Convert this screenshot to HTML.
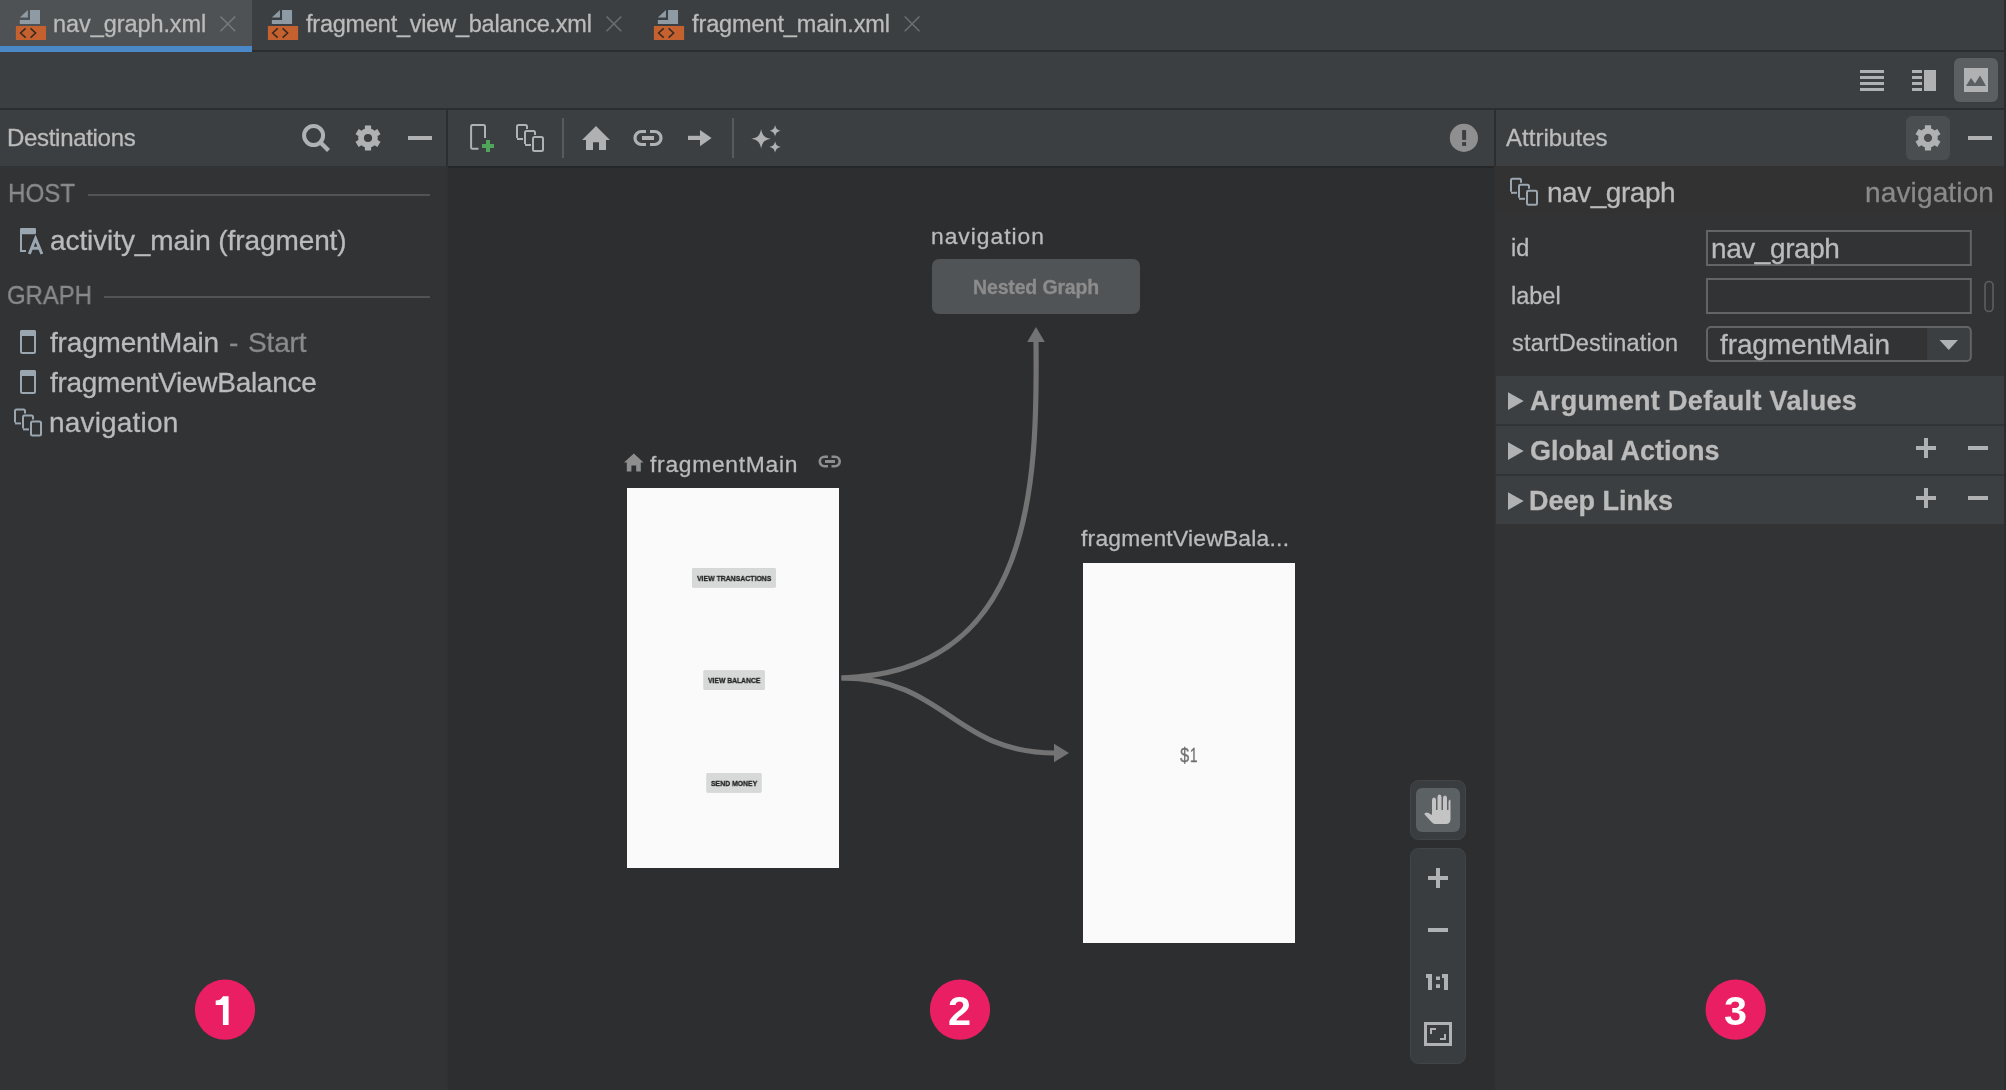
<!DOCTYPE html>
<html><head><meta charset="utf-8"><title>Navigation Editor</title>
<style>
html,body{margin:0;padding:0}
body{width:2006px;height:1090px;position:relative;overflow:hidden;background:#2D2E30;font-family:"Liberation Sans",sans-serif}
.a{position:absolute}
.t{position:absolute;white-space:nowrap;line-height:1;will-change:transform;-webkit-text-stroke:0.3px currentColor;font-family:"Liberation Sans",sans-serif}
svg{position:absolute;left:0;top:0}
</style></head><body>

<div class="a" style="left:0;top:0;width:2006px;height:50px;background:#3C3F41"></div>
<div class="a" style="left:0;top:50px;width:2006px;height:2px;background:#2B2D2E"></div>
<div class="a" style="left:0;top:0;width:252px;height:46px;background:#4E5254"></div>
<div class="a" style="left:0;top:46px;width:252px;height:6px;background:#4A88C7"></div>
<div class="a" style="left:0;top:52px;width:2006px;height:56px;background:#3C3F41"></div>
<div class="a" style="left:0;top:108px;width:2006px;height:2px;background:#2B2D2E"></div>
<div class="a" style="left:0;top:110px;width:2006px;height:56px;background:#3C3F41"></div>
<div class="a" style="left:0;top:166px;width:446px;height:924px;background:#323335"></div>
<div class="a" style="left:446px;top:110px;width:2px;height:56px;background:#2B2D2E"></div>
<div class="a" style="left:446px;top:166px;width:2px;height:924px;background:#333232"></div>
<div class="a" style="left:448px;top:166px;width:1046px;height:924px;background:#2D2E30"></div>
<div class="a" style="left:448px;top:166px;width:1046px;height:2px;background:#252627"></div>
<div class="a" style="left:1494px;top:110px;width:2px;height:56px;background:#2B2D2E"></div>
<div class="a" style="left:1494px;top:166px;width:2px;height:924px;background:#323131"></div>
<div class="a" style="left:1496px;top:166px;width:508px;height:924px;background:#323335"></div>
<div class="a" style="left:1496px;top:166px;width:508px;height:48px;background:#323233"></div>
<div class="a" style="left:2004px;top:0;width:2px;height:1090px;background:#2B2D2E"></div>

<svg width="2006" height="1090" viewBox="0 0 2006 1090">
<rect x="30.0" y="10" width="10" height="14" fill="#8E9BA4"/><rect x="19.8" y="20" width="10.2" height="4" fill="#8E9BA4"/><path d="M19.8,17.6 L27.9,10 L27.9,17.6 Z" fill="#8E9BA4"/><rect x="15.85" y="26" width="30.2" height="14" fill="#C5612F"/><path d="M25.6,28.3 L20.6,33 L25.6,37.7 M30.6,28.3 L35.6,33 L30.6,37.7" stroke="#3B2A22" stroke-width="1.6" fill="none"/>
<rect x="282.04999999999995" y="10" width="10" height="14" fill="#8E9BA4"/><rect x="271.84999999999997" y="20" width="10.2" height="4" fill="#8E9BA4"/><path d="M271.84999999999997,17.6 L279.95,10 L279.95,17.6 Z" fill="#8E9BA4"/><rect x="267.9" y="26" width="30.2" height="14" fill="#C5612F"/><path d="M277.65,28.3 L272.65,33 L277.65,37.7 M282.65,28.3 L287.65,33 L282.65,37.7" stroke="#3B2A22" stroke-width="1.6" fill="none"/>
<rect x="668.05" y="10" width="10" height="14" fill="#8E9BA4"/><rect x="657.8499999999999" y="20" width="10.2" height="4" fill="#8E9BA4"/><path d="M657.8499999999999,17.6 L665.9499999999999,10 L665.9499999999999,17.6 Z" fill="#8E9BA4"/><rect x="653.9" y="26" width="30.2" height="14" fill="#C5612F"/><path d="M663.65,28.3 L658.65,33 L663.65,37.7 M668.65,28.3 L673.65,33 L668.65,37.7" stroke="#3B2A22" stroke-width="1.6" fill="none"/>
<path d="M220.4,16.5 L235.20000000000002,31.3 M235.20000000000002,16.5 L220.4,31.3" stroke="#75797B" stroke-width="1.6" fill="none"/>
<path d="M606.5,16.5 L621.3,31.3 M621.3,16.5 L606.5,31.3" stroke="#6B6E70" stroke-width="1.6" fill="none"/>
<path d="M904.7,16.5 L919.5,31.3 M919.5,16.5 L904.7,31.3" stroke="#6B6E70" stroke-width="1.6" fill="none"/>
<rect x="1860" y="70" width="24" height="3" fill="#AFB1B3"/>
<rect x="1912" y="70" width="10" height="3" fill="#AFB1B3"/>
<rect x="1860" y="76" width="24" height="3" fill="#AFB1B3"/>
<rect x="1912" y="76" width="10" height="3" fill="#AFB1B3"/>
<rect x="1860" y="82" width="24" height="3" fill="#AFB1B3"/>
<rect x="1912" y="82" width="10" height="3" fill="#AFB1B3"/>
<rect x="1860" y="88" width="24" height="3" fill="#AFB1B3"/>
<rect x="1912" y="88" width="10" height="3" fill="#AFB1B3"/>
<rect x="1924" y="70" width="12" height="21" fill="#AFB1B3"/>
<rect x="1954" y="58" width="44" height="44" fill="#5B5F62" rx="6"/>
<rect x="1964" y="68" width="24" height="24" fill="#AFB1B3"/>
<path d="M1966,86 L1971,78 L1975,83.5 L1980,75.5 L1986,86 Z" fill="#5B5F62"/>
<circle cx="313.6" cy="135.5" r="9.5" stroke="#AFB1B3" stroke-width="4" fill="none"/>
<path d="M320.5,142.5 L328.5,150.5" stroke="#AFB1B3" stroke-width="4.2" fill="none"/>
<path d="M371.10,128.70 L371.10,125.38 L364.90,125.38 L364.90,128.70 A9.80,9.80 0 0 0 361.50,130.67 L358.62,129.00 L355.52,134.37 L358.40,136.04 A9.80,9.80 0 0 0 358.40,139.96 L355.52,141.63 L358.62,147.00 L361.50,145.33 A9.80,9.80 0 0 0 364.90,147.30 L364.90,150.62 L371.10,150.62 L371.10,147.30 A9.80,9.80 0 0 0 374.50,145.33 L377.38,147.00 L380.48,141.63 L377.60,139.96 A9.80,9.80 0 0 0 377.60,136.04 L380.48,134.37 L377.38,129.00 L374.50,130.67 A9.80,9.80 0 0 0 371.10,128.70 Z M363.90,138.00 A4.10,4.10 0 1 0 372.10,138.00 A4.10,4.10 0 1 0 363.90,138.00 Z" fill="#AFB1B3" fill-rule="evenodd"/>
<rect x="408" y="136" width="24" height="4" fill="#AFB1B3"/>
<path d="M478.5,148.8 L472.5,148.8 Q471.1,148.8 471.1,147.4 L471.1,126.4 Q471.1,125 472.5,125 L483.6,125 Q485,125 485,126.4 L485,138" stroke="#AFB1B3" stroke-width="2" fill="none"/>
<rect x="486" y="140" width="4" height="12" fill="#4FA55A"/>
<rect x="482" y="144" width="12" height="4" fill="#4FA55A"/>
<path d="M517.0,138.0 L517.0,126.5 Q517.0,125.0 518.5,125.0 L525.5,125.0 Q527.0,125.0 527.0,126.5 L527.0,129.0" stroke="#AFB1B3" stroke-width="2" fill="none"/><path d="M517.0,139.0 L523.0,139.0" stroke="#AFB1B3" stroke-width="2" fill="none"/><path d="M525.0,144.0 L525.0,132.5 Q525.0,131.0 526.5,131.0 L533.5,131.0 Q535.0,131.0 535.0,132.5 L535.0,135.0" stroke="#AFB1B3" stroke-width="2" fill="none"/><path d="M525.0,145.0 L531.0,145.0" stroke="#AFB1B3" stroke-width="2" fill="none"/><rect x="533.0" y="137.0" width="10" height="14" rx="1.5" stroke="#AFB1B3" stroke-width="2" fill="none"/>
<rect x="562" y="118" width="2" height="40" fill="#585B5D"/>
<path d="M582,140 L596,126 L610,140 L606,140 L606,150 L599,150 L599,142.2 L593,142.2 L593,150 L586,150 L586,140 Z" fill="#AFB1B3"/>
<path d="M646,131.5 L641.5,131.5 A6.5,6.5 0 0 0 641.5,144.5 L646,144.5" stroke="#AFB1B3" stroke-width="3.2" fill="none"/>
<path d="M650,131.5 L654.5,131.5 A6.5,6.5 0 0 1 654.5,144.5 L650,144.5" stroke="#AFB1B3" stroke-width="3.2" fill="none"/>
<rect x="642" y="136" width="12" height="4" fill="#AFB1B3"/>
<rect x="688" y="135.8" width="13" height="4.2" fill="#AFB1B3"/>
<path d="M700,130 L711.6,138 L700,146.2 Z" fill="#AFB1B3"/>
<rect x="732" y="118" width="2" height="40" fill="#585B5D"/>
<path d="M761.10,129.00 C762.28,135.47 764.43,137.62 770.90,138.80 C764.43,139.98 762.28,142.13 761.10,148.60 C759.92,142.13 757.77,139.98 751.30,138.80 C757.77,137.62 759.92,135.47 761.10,129.00 Z" fill="#AFB1B3"/>
<path d="M775.10,125.10 C775.90,128.75 777.15,130.00 780.80,130.80 C777.15,131.60 775.90,132.85 775.10,136.50 C774.30,132.85 773.05,131.60 769.40,130.80 C773.05,130.00 774.30,128.75 775.10,125.10 Z" fill="#AFB1B3"/>
<path d="M775.10,141.20 C775.90,144.85 777.15,146.10 780.80,146.90 C777.15,147.70 775.90,148.95 775.10,152.60 C774.30,148.95 773.05,147.70 769.40,146.90 C773.05,146.10 774.30,144.85 775.10,141.20 Z" fill="#AFB1B3"/>
<circle cx="1463.9" cy="137.9" r="14.1" fill="#8F8F8F"/>
<rect x="1462.1" y="130.1" width="4" height="9.8" fill="#3C3F41"/>
<rect x="1462.1" y="142.1" width="4" height="3.8" fill="#3C3F41"/>
<rect x="1906" y="116" width="44" height="44" fill="#4A4E50" rx="6"/>
<path d="M1931.10,128.60 L1931.10,125.28 L1924.90,125.28 L1924.90,128.60 A9.80,9.80 0 0 0 1921.50,130.57 L1918.62,128.90 L1915.52,134.27 L1918.40,135.94 A9.80,9.80 0 0 0 1918.40,139.86 L1915.52,141.53 L1918.62,146.90 L1921.50,145.23 A9.80,9.80 0 0 0 1924.90,147.20 L1924.90,150.52 L1931.10,150.52 L1931.10,147.20 A9.80,9.80 0 0 0 1934.50,145.23 L1937.38,146.90 L1940.48,141.53 L1937.60,139.86 A9.80,9.80 0 0 0 1937.60,135.94 L1940.48,134.27 L1937.38,128.90 L1934.50,130.57 A9.80,9.80 0 0 0 1931.10,128.60 Z M1923.90,137.90 A4.10,4.10 0 1 0 1932.10,137.90 A4.10,4.10 0 1 0 1923.90,137.90 Z" fill="#AFB1B3" fill-rule="evenodd"/>
<rect x="1968" y="136" width="24" height="4" fill="#AFB1B3"/>
<rect x="88" y="194" width="342" height="2" fill="#515355"/>
<rect x="104" y="296" width="326" height="2" fill="#515355"/>
<path d="M26,251 L21,251 L21,229.5 Q21,229 21.5,229 L34.5,229 Q35,229 35,229.5 L35,236" stroke="#9AA7B0" stroke-width="2" fill="none"/>
<path d="M29,254 L35.5,238 L42.5,254 M31.5,248.5 L40,248.5" stroke="#323335" stroke-width="5.5" fill="none"/>
<rect x="20" y="228" width="16" height="6.2" fill="#9AA7B0" rx="1.5"/>
<path d="M29.3,254 L35.5,238.5 L41.9,254 M31.8,248.3 L39.5,248.3" stroke="#9AA7B0" stroke-width="3.0" fill="none"/>
<rect x="21" y="331" width="14" height="22" rx="1.5" stroke="#9AA7B0" stroke-width="2" fill="none"/><rect x="20" y="330" width="16" height="6" rx="1.5" fill="#9AA7B0"/>
<rect x="21" y="371" width="14" height="22" rx="1.5" stroke="#9AA7B0" stroke-width="2" fill="none"/><rect x="20" y="370" width="16" height="6" rx="1.5" fill="#9AA7B0"/>
<path d="M15.0,422.4 L15.0,410.9 Q15.0,409.4 16.5,409.4 L23.5,409.4 Q25.0,409.4 25.0,410.9 L25.0,413.4" stroke="#9AA7B0" stroke-width="2" fill="none"/><path d="M15.0,423.4 L21.0,423.4" stroke="#9AA7B0" stroke-width="2" fill="none"/><path d="M23.0,428.4 L23.0,416.9 Q23.0,415.4 24.5,415.4 L31.5,415.4 Q33.0,415.4 33.0,416.9 L33.0,419.4" stroke="#9AA7B0" stroke-width="2" fill="none"/><path d="M23.0,429.4 L29.0,429.4" stroke="#9AA7B0" stroke-width="2" fill="none"/><rect x="31.0" y="421.4" width="10" height="14" rx="1.5" stroke="#9AA7B0" stroke-width="2" fill="none"/>
<rect x="932" y="259" width="208" height="55" fill="#505457" rx="7"/>
<path d="M841.5,678 C1033.9,672.7 1037.5,482 1036,341" stroke="#737373" stroke-width="5.2" fill="none"/>
<path d="M1027.2,342 L1036,327 L1044.8,342 Z" fill="#737373"/>
<path d="M841.5,678 C946,678 953,753 1055,753" stroke="#737373" stroke-width="5.2" fill="none"/>
<path d="M1054,743.8 L1069,753 L1054,762.2 Z" fill="#737373"/>
<rect x="627" y="488" width="212" height="380" fill="#FAFAFA"/>
<rect x="692.2" y="568.2" width="83.5" height="19.2" fill="#D7D8D8" rx="1" style="filter:drop-shadow(0 0.7px 0.7px rgba(0,0,0,.22))"/>
<rect x="703.6" y="670.6" width="61" height="19.1" fill="#D7D8D8" rx="1" style="filter:drop-shadow(0 0.7px 0.7px rgba(0,0,0,.22))"/>
<rect x="706.6" y="773" width="54.8" height="19.5" fill="#D7D8D8" rx="1" style="filter:drop-shadow(0 0.7px 0.7px rgba(0,0,0,.22))"/>
<rect x="1083" y="563" width="212" height="380" fill="#FAFAFA"/>
<path d="M624,462.5 L633.8,453.5 L643.6,462.5 L640.8,462.5 L640.8,471.6 L636.2,471.6 L636.2,465.5 L631.4,465.5 L631.4,471.6 L626.8,471.6 L626.8,462.5 Z" fill="#8E8E8E"/>
<path d="M828,456.8 L824.5,456.8 A4.5,4.5 0 0 0 824.5,466.2 L828,466.2 M831.5,456.8 L835,456.8 A4.5,4.5 0 0 1 835,466.2 L831.5,466.2" stroke="#8E8E8E" stroke-width="2.6" fill="none"/>
<rect x="825" y="460" width="10" height="3" fill="#8E8E8E"/>
<rect x="1410.5" y="780.5" width="55" height="59" fill="#3A3D3F" rx="8" stroke="#424547" stroke-width="1"/>
<rect x="1416" y="788" width="44" height="44" fill="#5C6164" rx="6"/>
<path d="M1432,800 Q1432,797.5 1434,797.5 Q1436,797.5 1436,800 L1436,810 L1437.5,810 L1437.5,797 Q1437.5,794.5 1439.5,794.5 Q1441.5,794.5 1441.5,797 L1441.5,810 L1443,810 L1443,798 Q1443,795.5 1445,795.5 Q1447,795.5 1447,798 L1447,810 L1448.5,810 L1448.5,802 Q1448.5,799.5 1450,799.5 Q1450.5,799.5 1450.5,802 L1450.5,819 Q1450.5,824 1446,824 L1435.5,824 Q1433.5,824 1432,822.5 L1424.2,814 Q1425.5,811.5 1428.5,813 L1432,815 Z" fill="#C4C4C4"/>
<rect x="1410.5" y="848.5" width="55" height="215" fill="#3A3D3F" rx="8" stroke="#424547" stroke-width="1"/>
<rect x="1428" y="876" width="20" height="4" fill="#AFB1B3"/>
<rect x="1436" y="868" width="4" height="20" fill="#AFB1B3"/>
<rect x="1428" y="928" width="20" height="4" fill="#AFB1B3"/>
<path d="M1426,974 L1432,974 L1432,990 L1428,990 L1428,978 L1426,978 Z M1442,974 L1448,974 L1448,990 L1444,990 L1444,978 L1442,978 Z" fill="#AFB1B3"/>
<rect x="1436" y="976.5" width="4" height="3.5" fill="#AFB1B3"/>
<rect x="1436" y="984.2" width="4" height="3.8" fill="#AFB1B3"/>
<rect x="1425.5" y="1023.5" width="25" height="21" stroke="#AFB1B3" stroke-width="3" fill="none"/>
<path d="M1431,1034 L1431,1029 L1436,1029 M1445,1034 L1445,1039 L1440,1039" stroke="#AFB1B3" stroke-width="2" fill="none"/>
<path d="M1511.0,191.8 L1511.0,180.3 Q1511.0,178.8 1512.5,178.8 L1519.5,178.8 Q1521.0,178.8 1521.0,180.3 L1521.0,182.8" stroke="#9AA7B0" stroke-width="2" fill="none"/><path d="M1511.0,192.8 L1517.0,192.8" stroke="#9AA7B0" stroke-width="2" fill="none"/><path d="M1519.0,197.8 L1519.0,186.3 Q1519.0,184.8 1520.5,184.8 L1527.5,184.8 Q1529.0,184.8 1529.0,186.3 L1529.0,188.8" stroke="#9AA7B0" stroke-width="2" fill="none"/><path d="M1519.0,198.8 L1525.0,198.8" stroke="#9AA7B0" stroke-width="2" fill="none"/><rect x="1527.0" y="190.8" width="10" height="14" rx="1.5" stroke="#9AA7B0" stroke-width="2" fill="none"/>
<rect x="1707" y="231" width="263.8" height="34" stroke="#646464" stroke-width="2" fill="none"/>
<rect x="1707" y="279" width="263.8" height="34" stroke="#646464" stroke-width="2" fill="none"/>
<rect x="1985" y="281.5" width="8" height="30" rx="4" stroke="#5E5E5E" stroke-width="1.6" fill="none"/>
<rect x="1928" y="327.5" width="43" height="33" fill="#3C3F41"/>
<rect x="1707" y="327" width="263.8" height="34" rx="4" stroke="#646464" stroke-width="2" fill="none"/>
<rect x="1927" y="328" width="1.5" height="32" fill="#3A3C3E"/>
<path d="M1939.5,340 L1958,340 L1948.75,350 Z" fill="#AFB1B3"/>
<rect x="1496" y="376" width="508" height="48" fill="#3C3F41"/>
<path d="M1508,392.2 L1523.7,401 L1508,409.9 Z" fill="#AFB1B3"/>
<rect x="1496" y="426" width="508" height="48" fill="#3C3F41"/>
<path d="M1508,442.2 L1523.7,451 L1508,459.9 Z" fill="#AFB1B3"/>
<rect x="1496" y="476" width="508" height="48" fill="#3C3F41"/>
<path d="M1508,492.2 L1523.7,501 L1508,509.9 Z" fill="#AFB1B3"/>
<rect x="1916" y="446" width="20" height="4" fill="#AFB1B3"/>
<rect x="1924" y="438" width="4" height="20" fill="#AFB1B3"/>
<rect x="1968" y="446" width="20" height="4" fill="#AFB1B3"/>
<rect x="1916" y="496" width="20" height="4" fill="#AFB1B3"/>
<rect x="1924" y="488" width="4" height="20" fill="#AFB1B3"/>
<rect x="1968" y="496" width="20" height="4" fill="#AFB1B3"/>
<circle cx="225" cy="1009.6" r="30.1" fill="#E91E63"/>
<circle cx="960" cy="1009.6" r="30.1" fill="#E91E63"/>
<circle cx="1735.7" cy="1009.6" r="30.1" fill="#E91E63"/>
<path d="M222.9,996.3 L228.6,996.3 L228.6,1024.9 L222.9,1024.9 L222.9,1005.1 L215.7,1005.1 L215.7,1000.6 Q221.2,1000.4 222.9,996.3 Z" fill="#FFFFFF"/>
</svg>
<div class="t" style="left:52.80px;top:13.40px;font-size:23.5px;font-weight:400;color:#BBBBBB;letter-spacing:-0.076px">nav_graph.xml</div>
<div class="t" style="left:306.10px;top:13.40px;font-size:23.5px;font-weight:400;color:#BBBBBB;letter-spacing:-0.223px">fragment_view_balance.xml</div>
<div class="t" style="left:692.00px;top:13.40px;font-size:23.5px;font-weight:400;color:#BBBBBB;letter-spacing:-0.112px">fragment_main.xml</div>
<div class="t" style="left:6.90px;top:126.30px;font-size:24px;font-weight:400;color:#BBBBBB;letter-spacing:-0.306px">Destinations</div>
<div class="t" style="left:1506.30px;top:125.90px;font-size:24px;font-weight:400;color:#BBBBBB;letter-spacing:0.013px">Attributes</div>
<div class="t" style="left:7.70px;top:181.10px;font-size:25.5px;font-weight:400;color:#8A8A8A;transform:scaleX(0.9479);transform-origin:0 0">HOST</div>
<div class="t" style="left:50.02px;top:227.30px;font-size:28px;font-weight:400;color:#BBBBBB;letter-spacing:-0.093px">activity_main (fragment)</div>
<div class="t" style="left:7.48px;top:283.20px;font-size:25.5px;font-weight:400;color:#8A8A8A;transform:scaleX(0.9364);transform-origin:0 0">GRAPH</div>
<div class="t" style="left:50.40px;top:328.70px;font-size:28px;font-weight:400;color:#BBBBBB;letter-spacing:-0.183px">fragmentMain</div>
<div class="t" style="left:228.53px;top:328.70px;font-size:28px;font-weight:400;color:#8A8A8A;letter-spacing:0.000px">-</div>
<div class="t" style="left:248.12px;top:328.70px;font-size:28px;font-weight:400;color:#8A8A8A;letter-spacing:-0.138px">Start</div>
<div class="t" style="left:50.40px;top:368.70px;font-size:28px;font-weight:400;color:#BBBBBB;letter-spacing:-0.285px">fragmentViewBalance</div>
<div class="t" style="left:48.65px;top:408.80px;font-size:28px;font-weight:400;color:#BBBBBB;letter-spacing:0.185px">navigation</div>
<div class="t" style="left:930.60px;top:224.60px;font-size:22.8px;font-weight:400;color:#BBBBBB;letter-spacing:0.993px">navigation</div>
<div class="t" style="left:972.60px;top:278.00px;font-size:19.5px;font-weight:700;color:#8C8C8C;letter-spacing:-0.150px">Nested Graph</div>
<div class="t" style="left:649.60px;top:452.60px;font-size:22.8px;font-weight:400;color:#BBBBBB;letter-spacing:0.735px">fragmentMain</div>
<div class="t" style="left:1081.00px;top:527.30px;font-size:22.8px;font-weight:400;color:#BBBBBB;letter-spacing:0.245px">fragmentViewBala...</div>
<div class="t" style="left:1180.04px;top:744.80px;font-size:20.3px;font-weight:400;color:#6E6E6E;transform:scaleX(0.8148);transform-origin:0 0">$</div>
<div class="t" style="left:1190.11px;top:744.80px;font-size:20.3px;font-weight:400;color:#6E6E6E;transform:scaleX(0.6591);transform-origin:0 0">1</div>
<div class="t" style="left:1547.15px;top:179.00px;font-size:28px;font-weight:400;color:#BBBBBB;letter-spacing:-0.463px">nav_graph</div>
<div class="t" style="left:1864.85px;top:179.00px;font-size:28px;font-weight:400;color:#8A8A8A;letter-spacing:0.141px">navigation</div>
<div class="t" style="left:1510.90px;top:236.70px;font-size:23.5px;font-weight:400;color:#BBBBBB;letter-spacing:0.000px">id</div>
<div class="t" style="left:1711.25px;top:234.80px;font-size:28px;font-weight:400;color:#BBBBBB;letter-spacing:-0.426px">nav_graph</div>
<div class="t" style="left:1510.90px;top:285.20px;font-size:23.5px;font-weight:400;color:#BBBBBB;letter-spacing:0.000px">label</div>
<div class="t" style="left:1511.80px;top:332.40px;font-size:23.5px;font-weight:400;color:#BBBBBB;letter-spacing:0.193px">startDestination</div>
<div class="t" style="left:1719.90px;top:331.00px;font-size:28px;font-weight:400;color:#BBBBBB;letter-spacing:-0.110px">fragmentMain</div>
<div class="t" style="left:1530.28px;top:387.90px;font-size:27px;font-weight:700;color:#BBBBBB;letter-spacing:0.329px">Argument Default Values</div>
<div class="t" style="left:1529.86px;top:438.00px;font-size:27px;font-weight:700;color:#BBBBBB;letter-spacing:0.000px">Global Actions</div>
<div class="t" style="left:1529.01px;top:488.30px;font-size:27px;font-weight:700;color:#BBBBBB;letter-spacing:0.000px">Deep Links</div>
<div class="t" style="left:697.00px;top:574.80px;font-size:8.0px;font-weight:700;color:#232323;transform:scaleX(0.8618);transform-origin:0 0">VIEW TRANSACTIONS</div>
<div class="t" style="left:708.00px;top:677.00px;font-size:8.0px;font-weight:700;color:#232323;transform:scaleX(0.8466);transform-origin:0 0">VIEW BALANCE</div>
<div class="t" style="left:710.83px;top:779.50px;font-size:8.0px;font-weight:700;color:#232323;transform:scaleX(0.8590);transform-origin:0 0">SEND MONEY</div>
<div class="t" style="left:947.70px;top:989.90px;font-size:41.5px;font-weight:700;color:#FFFFFF;letter-spacing:0.000px;-webkit-text-stroke:0">2</div>
<div class="t" style="left:1724.05px;top:989.90px;font-size:41.5px;font-weight:700;color:#FFFFFF;letter-spacing:0.000px;-webkit-text-stroke:0">3</div>
</body></html>
